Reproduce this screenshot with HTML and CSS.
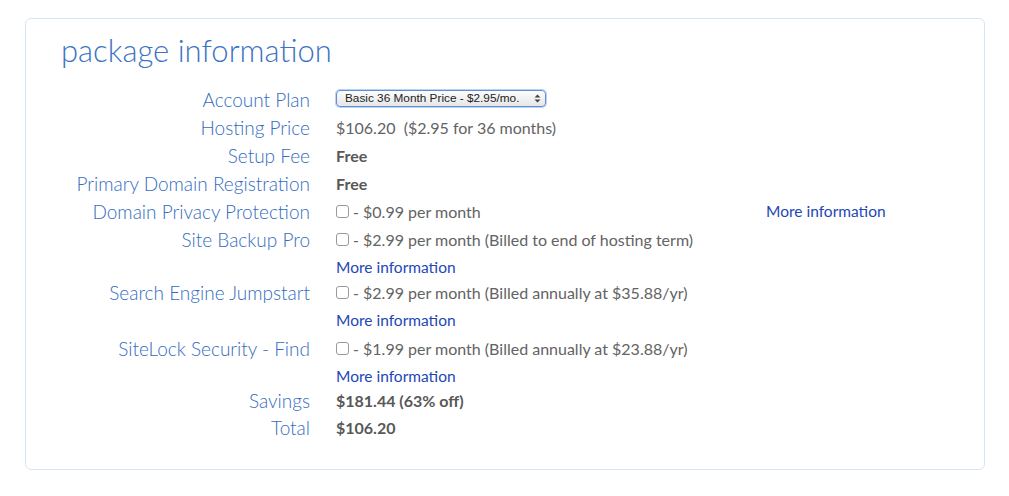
FILE: index.html
```html
<!DOCTYPE html>
<html>
<head>
<meta charset="utf-8">
<link rel="stylesheet" href="styles.css">
</head>
<body>
<div class="card">
  <h1 class="title">package information</h1>
  <div class="grid">
    <div class="label">Account Plan</div>
    <div class="value"><span class="select">Basic 36 Month Price - $2.95/mo.<span class="arrows"><svg width="7" height="9" viewBox="0 0 7 9"><path d="M0.5 3.5 L3.5 0.5 L6.5 3.5 Z M0.5 5.5 L3.5 8.5 L6.5 5.5 Z" fill="#444"/></svg></span></span></div>
    <div class="extra"></div>

    <div class="label">Hosting Price</div>
    <div class="value">$106.20&nbsp; ($2.95 for 36 months)</div>
    <div class="extra"></div>

    <div class="label">Setup Fee</div>
    <div class="value strong">Free</div>
    <div class="extra"></div>

    <div class="label">Primary Domain Registration</div>
    <div class="value strong">Free</div>
    <div class="extra"></div>

    <div class="label">Domain Privacy Protection</div>
    <div class="value"><span class="cb"></span> - $0.99 per month</div>
    <div class="extra"><a class="more">More information</a></div>

    <div class="label">Site Backup Pro</div>
    <div class="value"><span class="cb"></span> - $2.99 per month (Billed to end of hosting term)</div>
    <div class="extra"></div>
    <div class="label sub h25"></div>
    <div class="value sub h25"><a class="more">More information</a></div>
    <div class="extra sub h25"></div>

    <div class="label">Search Engine Jumpstart</div>
    <div class="value"><span class="cb"></span> - $2.99 per month (Billed annually at $35.88/yr)</div>
    <div class="extra"></div>
    <div class="label sub"></div>
    <div class="value sub"><a class="more">More information</a></div>
    <div class="extra sub"></div>

    <div class="label">SiteLock Security - Find</div>
    <div class="value"><span class="cb"></span> - $1.99 per month (Billed annually at $23.88/yr)</div>
    <div class="extra"></div>
    <div class="label sub h25"></div>
    <div class="value sub h25"><a class="more">More information</a></div>
    <div class="extra sub h25"></div>

    <div class="label h26">Savings</div>
    <div class="value strong h26">$181.44 (63% off)</div>
    <div class="extra h26"></div>

    <div class="label">Total</div>
    <div class="value strong">$106.20</div>
    <div class="extra"></div>
  </div>
</div>
</body>
</html>
```
FILE: styles.css
```css
html, body {
  margin: 0;
  padding: 0;
  background: #fff;
}
body {
  padding: 18px 24px 0 25px;
  font-family: "Lato", "Open Sans", sans-serif;
}
.card {
  box-sizing: border-box;
  width: 960px;
  height: 452px;
  border: 1px solid #d5e6f6;
  border-radius: 6px;
  padding: 11px 0 0 35px;
}
.title {
  margin: 0 0 15px 0;
  font-weight: 300;
  font-size: 31px;
  line-height: 40px;
  color: #3b72c4;
}
.grid {
  display: grid;
  grid-template-columns: 249px 404px auto;
  column-gap: 26px;
}
.grid > div {
  height: 28px;
  display: flex;
  align-items: center;
}
.grid > div.sub {
  align-items: flex-start;
  line-height: 28px;
}
.grid > div.h25 {
  height: 25px;
}
.grid > div.h26 {
  height: 26px;
}
.label {
  justify-content: flex-end;
  font-size: 19px;
  font-weight: 300;
  color: #336cc0;
  white-space: nowrap;
}
.value {
  font-size: 16px;
  color: #636363;
  white-space: nowrap;
}
.value.strong {
  font-weight: 700;
  color: #585858;
}
.more {
  font-size: 15.5px;
  color: #2447b5;
  text-decoration: none;
}
.cb {
  display: inline-block;
  box-sizing: border-box;
  width: 13px;
  height: 13px;
  border: 1px solid #999;
  border-radius: 3px;
  margin-right: 4px;
  background: #fff;
}
.select {
  display: inline-flex;
  align-items: center;
  box-sizing: border-box;
  height: 17px;
  width: 210px;
  padding: 0 0 0 8px;
  border: 1px solid #5b8fd6;
  border-radius: 4px;
  background: linear-gradient(#fdfdfd, #e6e6e6);
  box-shadow: 0 0 0 1px #bcd3f0;
  font-family: "Liberation Sans", Arial, sans-serif;
  font-size: 11.8px;
  color: #222;
  margin-top: -2px;
}
.arrows {
  margin-left: auto;
  margin-right: 4px;
  display: flex;
}
```
